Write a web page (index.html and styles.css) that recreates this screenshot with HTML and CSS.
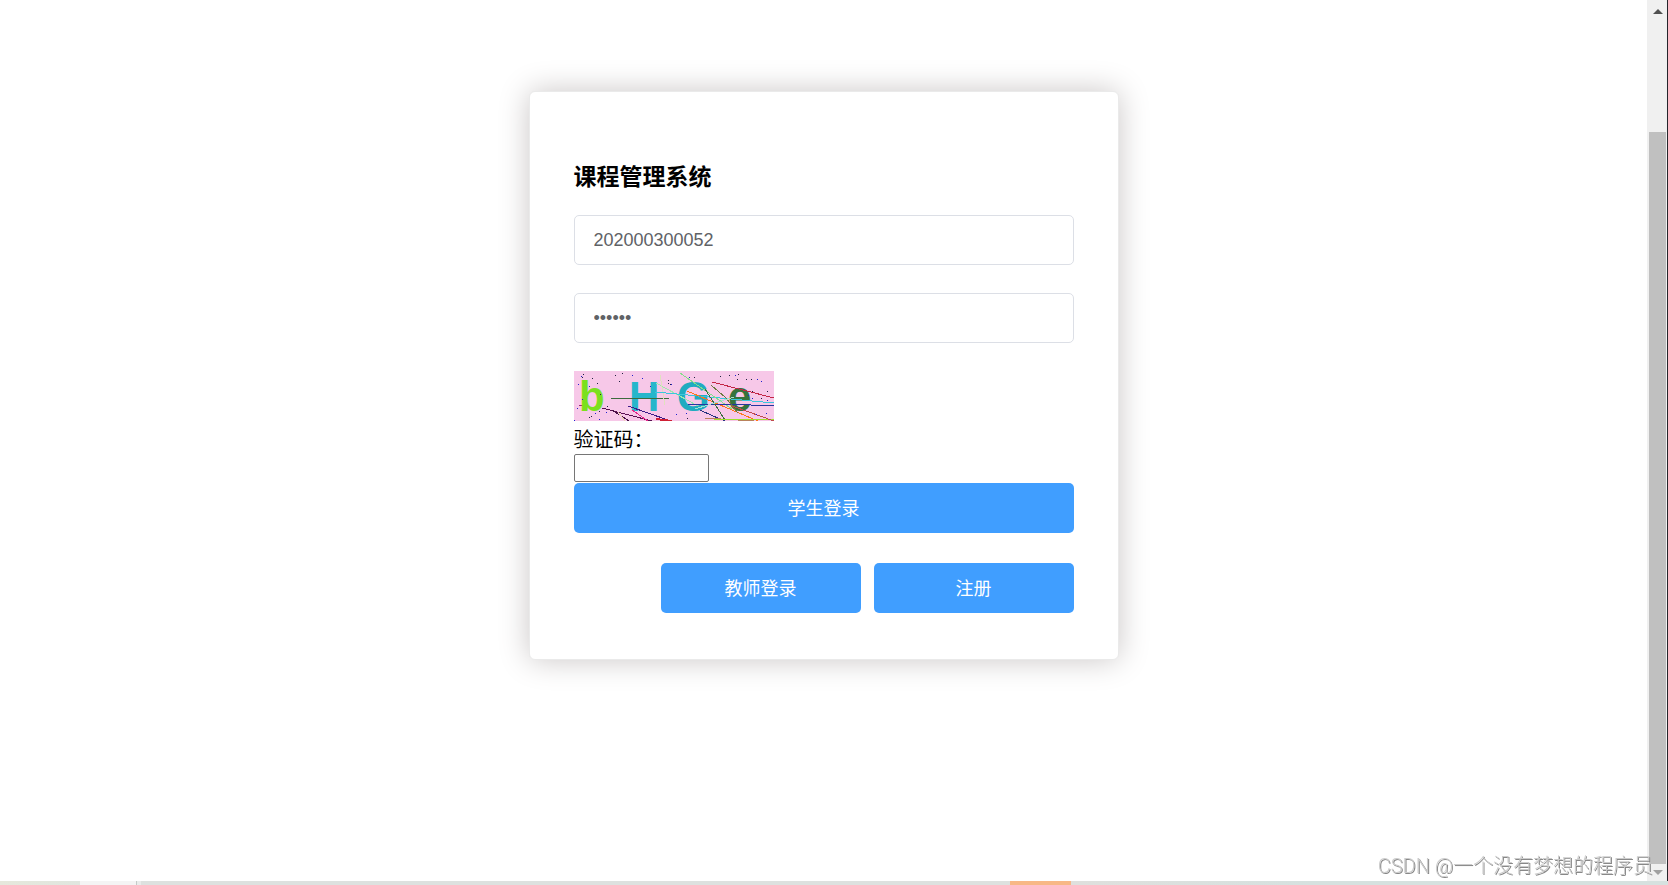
FILE: index.html
```html
<!DOCTYPE html>
<html lang="zh-CN">

<head>
    <meta charset="UTF-8">
    <meta name="viewport" content="width=device-width, initial-scale=1.0">
    <title>课程管理系统</title>
    <link rel="stylesheet" href="styles.css">
</head>

<body>
    <div class="window">
        <main class="page">
            <form class="login-container">
                <h3 class="login-title">课程管理系统</h3>
                <input class="login-input" type="text" aria-label="账号" value="202000300052">
                <input class="login-input" type="password" aria-label="密码" value="123456">

                <!-- 验证码图片 -->
                <svg class="captcha" viewBox="0 0 200 50" role="img" aria-label="验证码图片">
                    <rect width="200" height="50" fill="#f7c8e8"/>
                    <path d="M5 34.500H13" stroke="#9d2484"/>
                    <g class="captcha-text">
                        <text x="5" y="40" fill="#7be01e">b</text>
                        <text x="55" y="40" fill="#27b6cb">H</text>
                        <text x="103" y="40" fill="#20abc0">G</text>
                        <text x="154" y="40" fill="#36733d">e</text>
                    </g>
                    <g fill="none" stroke-width="1" shape-rendering="crispEdges">
                        <path d="M37 27H95" stroke="#3d6b3d"/>
                        <path d="M28 37L78 50" stroke="#5a1050"/>
                        <path d="M38 39L55 50" stroke="#461044"/>
                        <path d="M54 35L94 49" stroke="#3d1c88"/>
                        <path d="M58 39L74 50" stroke="#e5268c"/>
                        <path d="M82 48L98 50" stroke="#cf2035" stroke-width="2"/>
                        <path d="M82 12L124 35" stroke="#9be8ae"/>
                        <path d="M86 4L91 34" stroke="#dfe1bd"/>
                        <path d="M44 41L51 50" stroke="#ecd2b2"/>
                        <path d="M81 21L200 32" stroke="#39c7dd"/>
                        <path d="M106 2L158 38" stroke="#82df88"/>
                        <path d="M113 20L184 50" stroke="#ff7518"/>
                        <path d="M114 33H154L200 35" stroke="#2637a0"/>
                        <path d="M126 39L139 45L151 50" stroke="#263280"/>
                        <path d="M131 18L151 49" stroke="#397040"/>
                        <path d="M137 14L152 27L164 42" stroke="#6b7a40"/>
                        <path d="M138 11L200 27" stroke="#c32646"/>
                        <path d="M121 38L160 26" stroke="#a6ddd0"/>
                        <path d="M131 47L180 50" stroke="#b9825d"/>
                        <path d="M139 48L200 49" stroke="#9ee02b"/>
                        <path d="M158 35L200 50" stroke="#c04b4d"/>
                    </g>
                    <g fill="none" stroke-width="1" shape-rendering="crispEdges">
                        <path stroke="#2020d0" d="M7 5h1M15 15h1M4 13h1M8 28h1M3 37h1M32 41h1M25 48h1M0 49h1M76 15h1M68 7h1M58 4h1M97 13h1M115 6h1M161 4h1M183 8h1M187 10h1M178 27h1M193 29h1M192 42h1M174 24h1M21 42h1M102 43h1M112 42h1M182 43h1"/>
                        <path stroke="#202040" d="M9 3h1M8 6h1M18 7h1M23 12h1M26 23h1M41 4h1M48 2h1M45 10h1M94 9h1M94 12h1M96 13h1M146 5h1M155 4h1M164 3h1M163 8h1M172 8h1M177 8h1M33 35h1M15 46h1M17 45h1M25 40h1M120 6h1M113 47h1M178 20h1M187 27h1M193 20h1"/>
                    </g>
                </svg>

                <label class="code-label" for="code">验证码：</label>
                <input class="code-input" type="text" id="code">

                <button class="button" type="button">学生登录</button>
                <div class="button-row">
                    <button class="button" type="button">教师登录</button>
                    <button class="button" type="button">注册</button>
                </div>
            </form>
        </main>

        <!-- 滚动条 -->
        <div class="scrollbar">
            <div class="scroll-arrow"><svg width="10" height="5" viewBox="0 0 10 5"><path d="M0 5L5 0L10 5Z" fill="#505050"/></svg></div>
            <div class="scroll-space"></div>
            <div class="scroll-thumb"></div>
            <div class="scroll-arrow"><svg width="10" height="5" viewBox="0 0 10 5"><path d="M0 0L5 5L10 0Z" fill="#a0a0a0"/></svg></div>
        </div>
    </div>

    <!-- 任务栏 -->
    <div class="taskbar">
        <span class="task-start"></span>
        <span class="task-search"></span>
        <span class="task-line"></span>
        <span class="task-apps"></span>
        <span class="task-active"></span>
        <span class="task-rest"></span>
    </div>

    <div class="watermark">CSDN @一个没有梦想的程序员</div>
</body>

</html>
```

FILE: styles.css
```css
* {
    box-sizing: border-box;
}

body {
    margin: 0;
    height: 100vh;
    display: flex;
    flex-direction: column;
    overflow: hidden;
    background: #fff;
    color: #000;
    font-family: "Liberation Sans", "Noto Sans CJK SC", sans-serif;
    font-size: 20px;
}

.window {
    flex: 1;
    min-height: 0;
    display: flex;
}

.page {
    flex: 1;
    padding: 91px 20px 0;
}

/* 登录框 */
.login-container {
    display: flex;
    flex-direction: column;
    align-items: flex-start;
    max-width: 590px;
    margin: 0 auto;
    padding: 44px 44px 46px;
    border: 1px solid #eaeaea;
    border-radius: 6px;
    background: #fff;
    box-shadow: 0 0 31px #cac6c6;
}

.login-title {
    margin: 26px 0 22px;
    font-size: 23px;
    line-height: 31px;
}

.login-input {
    width: 100%;
    height: 50px;
    margin-bottom: 28px;
    padding: 0 19px;
    border: 1px solid #dcdfe6;
    border-radius: 5px;
    background: #fff;
    color: #606266;
    font-family: inherit;
    font-size: 18px;
}

/* 验证码 */
.captcha {
    display: block;
    width: 200px;
    height: 50px;
}

.captcha-text {
    font-size: 42px;
    font-weight: bold;
}

.code-label {
    margin-top: 6px;
    line-height: 27px;
}

.code-input {
    width: 135px;
    height: 28px;
    margin-bottom: 1px;
    padding: 0 4px;
    border: 1px solid #767676;
    border-radius: 2px;
    font-family: inherit;
    font-size: 16px;
}

/* 按钮 */
.button {
    width: 100%;
    height: 50px;
    padding: 0 0 3px;
    border: none;
    border-radius: 5px;
    background: #409eff;
    color: #fff;
    font-family: inherit;
    font-size: 18px;
    cursor: pointer;
}

.button:hover {
    background: #66b1ff;
}

.button-row {
    display: flex;
    gap: 13px;
    width: 100%;
    margin-top: 30px;
    justify-content: flex-end;
}

.button-row .button {
    width: 200px;
}

/* 滚动条 */
.scrollbar {
    display: flex;
    flex-direction: column;
    width: 21px;
    padding: 0 1px 0 2px;
    border-right: 1px solid #25252b;
    background: #f0f0f0;
}

.scroll-arrow {
    display: flex;
    align-items: center;
    justify-content: center;
    height: 22px;
}

.scroll-arrow:last-child {
    height: 17px;
}

.scroll-space {
    flex: 110;
}

.scroll-thumb {
    flex: 732;
    background: #c0c0c0;
}

/* 任务栏 */
.taskbar {
    display: flex;
    height: 4px;
    background: #dde1df;
}

.task-start {
    width: 80px;
    background: linear-gradient(90deg, #e6e8dc, #e0e6df);
}

.task-search {
    width: 56px;
    background: #f4f4f4;
}

.task-line {
    width: 5px;
    border-left: 1px solid #c4cbc8;
    background: #e9eceb;
}

.task-apps {
    flex: 869;
}

.task-active {
    width: 61px;
    background: #f8b886;
}

.task-rest {
    flex: 597;
    background: linear-gradient(90deg, #dfe0dd, #d6e1df 40%);
}

/* 水印 */
.watermark {
    position: fixed;
    right: 15px;
    bottom: 4px;
    color: #ccc;
    font-family: Roboto, "Noto Sans CJK SC", sans-serif;
    font-size: 20px;
    font-weight: 300;
    line-height: 30px;
    text-shadow: 1px 1px 0 #888;
}
```
